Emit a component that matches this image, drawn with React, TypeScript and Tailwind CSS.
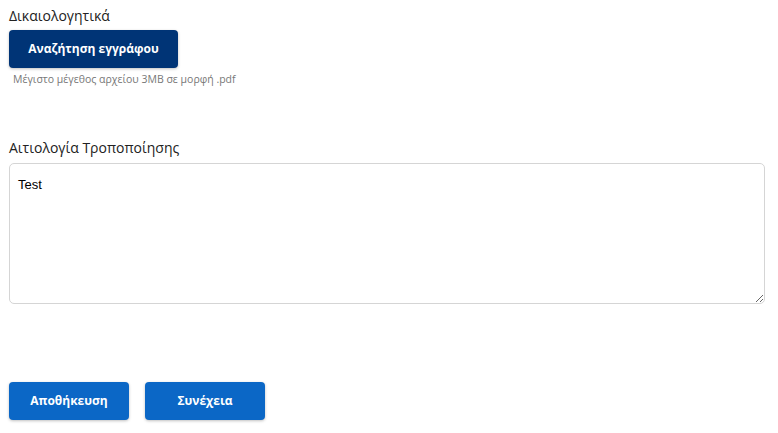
const labelFont = "font-['Open_Sans','Noto_Sans',sans-serif]";

export default function App() {
  return (
    <div className={`w-[778px] h-[433px] bg-white px-[9px] pt-[5px] ${labelFont}`}>
      <div className="flex flex-col items-start">
        <label className="text-[14px] leading-[22px] text-[#222]">Δικαιολογητικά</label>
        <button className="mt-[3px] w-[169px] h-[38px] rounded-[4px] bg-[#003476] text-white text-[12px] font-bold shadow-[0_1px_3px_rgba(0,0,0,0.25)]">
          Αναζήτηση εγγράφου
        </button>
        <span className="mt-[3px] ml-[4px] text-[10.5px] leading-[16px] text-[#777]">
          Μέγιστο μέγεθος αρχείου 3MB σε μορφή .pdf
        </span>
      </div>

      <div className="mt-[50px] flex flex-col">
        <label className="text-[14px] leading-[22px] text-[#222]">Αιτιολογία Τροποποίησης</label>
        <textarea
          defaultValue="Test"
          className="mt-[4px] w-[756px] h-[141px] rounded-[5px] border border-[#d5d5d5] px-[8px] py-[11px] text-[13px] text-black font-['Liberation_Sans',Arial,sans-serif] outline-none"
        />
      </div>

      <div className="mt-[78px] flex gap-[16px]">
        <button className="w-[120px] h-[38px] rounded-[4px] bg-[#0b67c6] text-white text-[12px] font-bold shadow-[0_1px_3px_rgba(0,0,0,0.25)]">
          Αποθήκευση
        </button>
        <button className="w-[120px] h-[38px] rounded-[4px] bg-[#0b67c6] text-white text-[12px] font-bold shadow-[0_1px_3px_rgba(0,0,0,0.25)]">
          Συνέχεια
        </button>
      </div>
    </div>
  );
}
